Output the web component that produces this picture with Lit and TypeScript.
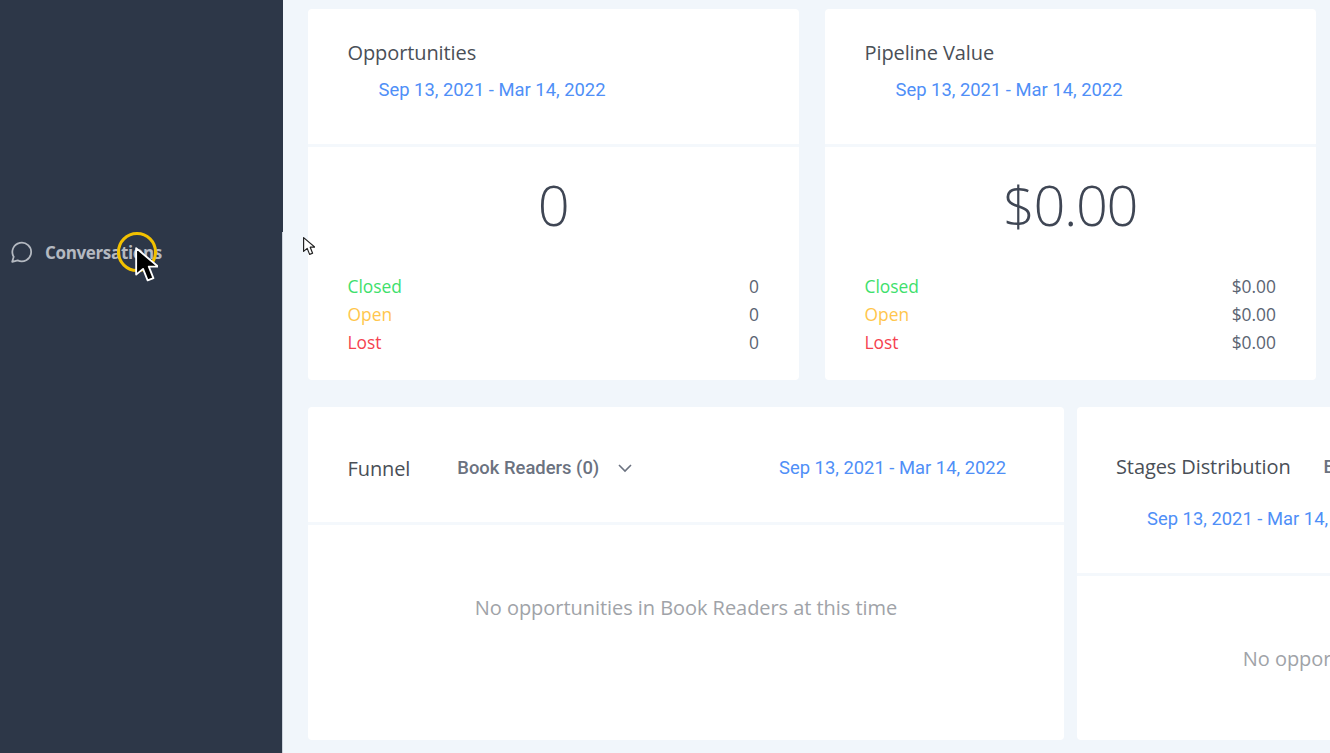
import { LitElement, html, css, svg } from "lit";
import { customElement } from "lit/decorators.js";

const RANGE = "Sep 13, 2021 - Mar 14, 2022";

@customElement("app-root")
export class AppRoot extends LitElement {
  static styles = css`
    :host {
      display: block;
      width: 1330px;
      height: 753px;
      overflow: hidden;
      position: relative;
      background: #f1f6fb;
      font-family: Roboto, "Liberation Sans", sans-serif;
    }
    .page {
      display: flex;
      height: 753px;
    }
    .side {
      flex: none;
      width: 283px;
      height: 753px;
      background: #2d3748;
      box-sizing: border-box;
      padding: 241px 0 0 10px;
    }
    .nav {
      display: flex;
      align-items: center;
      gap: 11px;
      height: 22px;
      color: #b4b9c1;
      font-size: 17px;
      font-weight: 700;
      font-family: "Open Sans", sans-serif;
      letter-spacing: -0.35px;
    }
    .nav svg {
      flex: none;
    }
    .main {
      flex: none;
      width: 1047px;
      box-sizing: border-box;
      padding: 9px 0 0 25px;
    }
    .row {
      display: flex;
    }
    .top {
      gap: 26px;
      height: 371px;
    }
    .bottom {
      gap: 13px;
      height: 333px;
      margin-top: 27px;
      width: 1523px;
    }
    .card {
      background: #fff;
      border-radius: 4px;
      display: flex;
      flex-direction: column;
    }
    .small {
      width: 491px;
      flex: none;
    }
    .wide {
      width: 756px;
      flex: none;
    }
    .head {
      border-bottom: 3px solid #f4f8fc;
      box-sizing: border-box;
    }
    .small .head {
      height: 138px;
      padding: 32px 40px 0 39.5px;
    }
    .title {
      color: #4a4f57;
      font-size: 20px;
      line-height: 24px;
      font-weight: 400;
      font-family: "Open Sans", sans-serif;
      letter-spacing: -0.1px;
    }
    .range {
      color: #4f8ff7;
      font-size: 18.4px;
      line-height: 24px;
    }
    .small .range {
      margin: 13px 0 0 31px;
    }
    .total {
      text-align: center;
      color: #3f4654;
      font-size: 56px;
      font-weight: 300;
      line-height: 64px;
      margin-top: 25px;
      padding-right: 1px;
      font-family: "Open Sans", sans-serif;
      letter-spacing: -1.4px;
    }
    .stats {
      margin: 36px 40px 0 39.5px;
    }
    .stat {
      display: flex;
      justify-content: space-between;
      height: 28px;
      line-height: 28px;
      font-size: 17.4px;
      font-family: "Open Sans", sans-serif;
      color: #5b6472;
    }
    .closed { color: #3ee06c; }
    .open { color: #ffc64d; }
    .lost { color: #f5424f; }
    .funnel .head {
      height: 118px;
      display: flex;
      align-items: center;
      padding: 6px 58px 0 39.5px;
    }
    .funnel .title {
      margin-top: 3px;
    }
    .funnel .sel {
      margin-left: 47px;
      color: #6b7280;
      font-size: 18.4px;
      font-weight: 500;
    }
    .funnel svg {
      margin-left: 18px;
    }
    .funnel .range {
      margin-left: auto;
    }
    .empty {
      color: #a0a3a8;
      font-size: 20px;
      font-family: "Open Sans", sans-serif;
      text-align: center;
      line-height: 24px;
      letter-spacing: -0.05px;
    }
    .funnel .empty {
      margin-top: 71px;
    }
    .stages .head {
      height: 169px;
      padding: 48px 39px 0;
    }
    .stages .top-line {
      display: flex;
      gap: 33px;
    }
    .stages .sel {
      color: #6b7280;
      font-size: 18.4px;
      line-height: 24px;
      font-weight: 500;
    }
    .stages .range {
      margin: 28px 0 0 31px;
    }
    .stages .empty {
      margin-top: 71px;
      padding-right: 2px;
    }
    .strip {
      position: absolute;
      left: 282px;
      top: 232px;
      width: 1px;
      height: 521px;
      background: #cdd3dc;
    }
    .ring {
      position: absolute;
      left: 117px;
      top: 232px;
      width: 40px;
      height: 40px;
      box-sizing: border-box;
      border: 3px solid #f2c100;
      border-radius: 50%;
    }
    .cursor {
      position: absolute;
    }
  `;

  private arrow(x: number, y: number, w: number, fill: string, line: string, weight: number) {
    return html`<svg class="cursor" style="left:${x}px;top:${y}px" width=${w} height=${w * 1.5} viewBox="0 0 20 30">
      ${svg`<path d="M1 1v23l6-5 4 10 5-2-4-10h8z" fill=${fill} stroke=${line} stroke-width=${weight} stroke-linejoin="round"/>`}
    </svg>`;
  }

  private statCard(title: string, total: string, closed: string, open: string, lost: string) {
    return html`<section class="card small">
      <div class="head">
        <div class="title">${title}</div>
        <div class="range">${RANGE}</div>
      </div>
      <div class="total">${total}</div>
      <div class="stats">
        <div class="stat"><span class="closed">Closed</span><span>${closed}</span></div>
        <div class="stat"><span class="open">Open</span><span>${open}</span></div>
        <div class="stat"><span class="lost">Lost</span><span>${lost}</span></div>
      </div>
    </section>`;
  }

  render() {
    return html`
      <div class="page">
        <aside class="side">
          <div class="nav">
            <svg width="24" height="24" viewBox="0 0 22 22" fill="none" stroke="#b4b9c1" stroke-width="1.6" stroke-linejoin="round">
              <path d="M2 20l1.4-4.6A8.6 8.6 0 1 1 7 18.7z" />
            </svg>
            <span>Conversations</span>
          </div>
        </aside>
        <main class="main">
          <div class="row top">
            ${this.statCard("Opportunities", "0", "0", "0", "0")}
            ${this.statCard("Pipeline Value", "$0.00", "$0.00", "$0.00", "$0.00")}
          </div>
          <div class="row bottom">
            <section class="card wide funnel">
              <div class="head">
                <span class="title">Funnel</span>
                <span class="sel">Book Readers (0)</span>
                <svg width="16" height="10" viewBox="0 0 16 10" fill="none" stroke="#6b7280" stroke-width="1.6">
                  <path d="M2 2l6 6 6-6" />
                </svg>
                <span class="range">${RANGE}</span>
              </div>
              <div class="empty">No opportunities in Book Readers at this time</div>
            </section>
            <section class="card wide stages">
              <div class="head">
                <div class="top-line">
                  <span class="title">Stages Distribution</span>
                  <span class="sel">Book Readers (0)</span>
                </div>
                <div class="range">${RANGE}</div>
              </div>
              <div class="empty">No opportunities in Book Readers at this time</div>
            </section>
          </div>
        </main>
      </div>
      <div class="strip"></div>
      <div class="ring"></div>
      ${this.arrow(135, 247, 23, "#000", "#fff", 1.6)}
      ${this.arrow(303, 237, 12, "#fff", "#222", 2)}
    `;
  }
}
